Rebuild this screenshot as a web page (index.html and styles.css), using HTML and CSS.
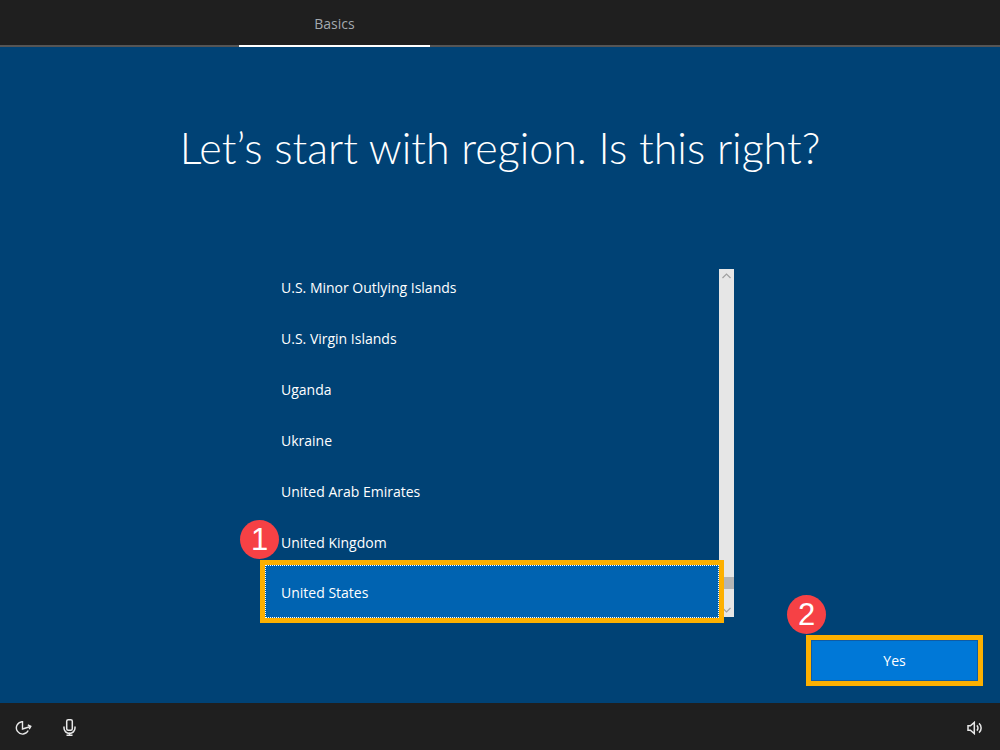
FILE: index.html
```html
<!DOCTYPE html>
<html>
    <head>
        <title>Basics</title>
        <link rel="stylesheet" href="styles.css">
    </head>
<body>
    <div class='top-bar'>
        <div class='tab'>Basics</div>
    </div>

    <div class='main'>
        <h1 class='title'>Let’s start with region. Is this right?</h1>

        <div class='list-box'>
            <div class='list-rows'>
                <div class='list-row'>U.S. Minor Outlying Islands</div>
                <div class='list-row'>U.S. Virgin Islands</div>
                <div class='list-row'>Uganda</div>
                <div class='list-row'>Ukraine</div>
                <div class='list-row'>United Arab Emirates</div>
                <div class='list-row'>United Kingdom</div>
                <div class='list-row list-row-selected'>United States</div>
                <div class='badge badge-one'>1</div>
            </div>
            <div class='scrollbar'>
                <svg class='scroll-arrow' width='15' height='14' viewBox='0 0 15 14'><path d='M3.5 9 L7.5 5 L11.5 9' fill='none' stroke='#a0a0a0' stroke-width='1.2'/></svg>
                <div class='scroll-track'><div class='scroll-thumb'></div></div>
                <svg class='scroll-arrow' width='15' height='14' viewBox='0 0 15 14'><path d='M3.5 5 L7.5 9 L11.5 5' fill='none' stroke='#a0a0a0' stroke-width='1.2'/></svg>
            </div>
        </div>

        <div class='actions'>
            <div class='button-wrap'>
                <button class='button-yes'>Yes</button>
                <div class='badge badge-two'>2</div>
            </div>
        </div>
    </div>

    <div class='bottom-bar'>
        <div class='bottom-left'>
            <svg width='17' height='16' viewBox='0 0 17 16' fill='none' stroke='#e8e8e8' stroke-width='1.4'>
                <path d='M7 1.7 A6.2 6.2 0 1 0 13.2 10.5'/>
                <path d='M7.5 1 V9 L15.5 6.5'/>
                <path d='M12.8 4.8 L15.8 6.4 L14.2 9.2'/>
            </svg>
            <svg width='13' height='17' viewBox='0 0 13 17' fill='none' stroke='#e8e8e8' stroke-width='1.5'>
                <rect x='3.7' y='0.8' width='5.6' height='10.4' rx='1.5'/>
                <path d='M1 7.5 V9 A5.5 5.5 0 0 0 12 9 V7.5'/>
                <path d='M6.5 13.5 V16.2 M3.5 16.2 H9.5'/>
            </svg>
        </div>
        <svg width='15' height='14' viewBox='0 0 15 14' fill='none' stroke='#e8e8e8' stroke-width='1.5'>
            <path d='M1 4.7 H3.4 L7.3 1.4 V12.6 L3.4 9.3 H1 Z'/>
            <path d='M9.8 4.4 A3.4 3.4 0 0 1 9.8 9.6'/>
            <path d='M12 2.4 A6 6 0 0 1 12 11.6'/>
        </svg>
    </div>
</body>
</html>
```

FILE: styles.css
```css
html, body {
    margin: 0;
    height: 100%;
}
body {
    display: flex;
    flex-direction: column;
    height: 750px;
    overflow: hidden;
    background: #004275;
    color: #fff;
    font-family: 'Open Sans', 'Noto Sans', sans-serif;
}

.top-bar {
    height: 45px;
    flex: none;
    background: #1f1f1f;
    border-bottom: 2px solid #555;
    padding-left: 239px;
}
.tab {
    width: 191px;
    height: 45px;
    margin-bottom: -2px;
    border-bottom: 2px solid #fff;
    text-align: center;
    font-size: 14px;
    line-height: 48px;
    color: #a3a9ae;
}

.main {
    flex: 1;
    display: flex;
    flex-direction: column;
    min-height: 0;
}
.title {
    margin: 70px 0 0 0;
    height: 143px;
    text-align: center;
    font-family: Lato, sans-serif;
    font-size: 43px;
    font-weight: 300;
    line-height: 62px;
}

.list-box {
    display: flex;
    width: 469px;
    margin: 0 auto;
    padding-right: 1px;
}
.list-rows {
    position: relative;
    width: 454px;
}
.list-row {
    height: 51px;
    box-sizing: border-box;
    padding-left: 16px;
    font-size: 14px;
    line-height: 55px;
}
.list-row-selected {
    position: relative;
    z-index: 1;
    height: 53px;
    margin: -1px 0;
    background: #0063b1;
    border: 1px dotted #fff;
    padding-left: 15px;
    line-height: 53px;
    outline: 5px solid #fdb000;
}

.scrollbar {
    width: 15px;
    margin-top: 9px;
    display: flex;
    flex-direction: column;
    background: #e6e6e6;
}
.scroll-arrow {
    flex: none;
    display: block;
}
.scroll-track {
    flex: 1;
    display: flex;
    flex-direction: column;
    justify-content: flex-end;
}
.scroll-thumb {
    height: 12px;
    margin-bottom: 14px;
    background: #b5b5b5;
}

.badge {
    position: absolute;
    z-index: 2;
    width: 39px;
    height: 39px;
    border-radius: 50%;
    background: #f64145;
    color: #fff;
    text-align: center;
    font-family: 'Liberation Sans', sans-serif;
    font-size: 31px;
    line-height: 39px;
}
.badge-one {
    left: -25px;
    top: 260px;
}
.badge-two {
    left: -24px;
    top: -45px;
}

.actions {
    display: flex;
    justify-content: flex-end;
    padding: 23px 22px 0 0;
}
.button-wrap {
    position: relative;
}
.button-yes {
    display: block;
    box-sizing: border-box;
    width: 167px;
    height: 41px;
    border: 1px solid #0f5ca6;
    padding: 0;
    background: #0078d7;
    color: #fff;
    font-family: inherit;
    font-size: 14px;
    outline: 5px solid #fdb000;
}

.bottom-bar {
    height: 47px;
    flex: none;
    display: flex;
    align-items: center;
    justify-content: space-between;
    background: #1f1f1f;
    padding: 2px 18px 0 15px;
    box-sizing: border-box;
}
.bottom-left {
    display: flex;
    align-items: center;
    gap: 31px;
}
```
